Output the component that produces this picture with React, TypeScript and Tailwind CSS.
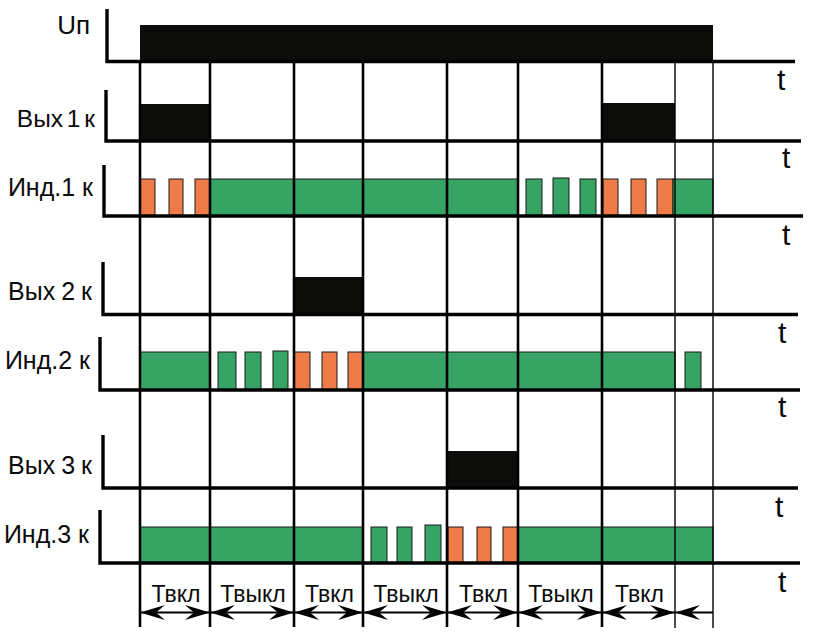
import React from "react";

type Seg = [number, number, string, number?];

const G = "#36a464";
const O = "#ef7c48";
const K = "#0c0c0a";

const rows: {
  label: string;
  lx: number;
  ly: number;
  axX: number;
  axTop: number;
  axY: number;
  axEnd: number;
  top: number;
  segs: Seg[];
  outline?: boolean;
  tx: number;
  ty: number;
  fs: number;
  ws: number;
}[] = [
  {
    label: "Uп", lx: 90, ly: 34, axX: 107, axTop: 9, axY: 61.5, axEnd: 795, top: 25,
    segs: [[140, 713, K]], tx: 777, ty: 90, fs: 26, ws: 0,
  },
  {
    label: "Вых 1 к", lx: 95, ly: 127, axX: 106, axTop: 90, axY: 141, axEnd: 801, top: 104,
    segs: [[140, 210, K], [602, 675, K, 103]], tx: 782, ty: 168, fs: 24.5, ws: -3,
  },
  {
    label: "Инд.1 к", lx: 93, ly: 196, axX: 104, axTop: 165, axY: 216, axEnd: 803, top: 179, outline: true,
    segs: [
      [140, 155, O], [169, 183, O], [195, 210, O],
      [210, 518, G],
      [526, 542, G], [553, 569, G, 178], [580, 596, G],
      [603, 618, O], [631, 646, O], [657, 673, O],
      [673, 713, G],
    ], tx: 782, ty: 245, fs: 25, ws: 0,
  },
  {
    label: "Вых 2 к", lx: 92, ly: 300, axX: 103, axTop: 262, axY: 314.5, axEnd: 798, top: 277,
    segs: [[294, 363, K]], tx: 778, ty: 343, fs: 25, ws: -1,
  },
  {
    label: "Инд.2 к", lx: 90, ly: 369, axX: 100, axTop: 337, axY: 390, axEnd: 800, top: 352, outline: true,
    segs: [
      [140, 210, G],
      [218, 236, G], [245, 261, G], [273, 288, G, 351],
      [294, 310, O], [322, 337, O], [348, 363, O],
      [363, 675, G],
      [685, 701, G],
    ], tx: 778, ty: 417, fs: 25, ws: 0,
  },
  {
    label: "Вых 3 к", lx: 92, ly: 474, axX: 103, axTop: 435, axY: 488, axEnd: 798, top: 451,
    segs: [[447, 518, K]], tx: 775, ty: 517, fs: 25, ws: -1,
  },
  {
    label: "Инд.3 к", lx: 89, ly: 543, axX: 100, axTop: 510, axY: 563, axEnd: 800, top: 527, outline: true,
    segs: [
      [140, 363, G],
      [371, 387, G], [397, 412, G], [425, 441, G, 525],
      [448, 463, O], [477, 491, O], [503, 518, O],
      [518, 713, G],
    ], tx: 778, ty: 592, fs: 25, ws: 0,
  },
];

const thick = [140, 210, 294, 363, 447, 518, 602];
const segments: [number, number, string][] = [
  [140, 210, "Твкл"],
  [210, 294, "Твыкл"],
  [294, 363, "Твкл"],
  [363, 447, "Твыкл"],
  [447, 518, "Твкл"],
  [518, 602, "Твыкл"],
  [602, 675, "Твкл"],
];

const AY = 612.5;
const headLeft = (x: number) =>
  `M${x},${AY} L${x + 25},${AY - 7.5} L${x + 16},${AY} L${x + 25},${AY + 7.5} Z`;
const headRight = (x: number) =>
  `M${x},${AY} L${x - 25},${AY - 7.5} L${x - 16},${AY} L${x - 25},${AY + 7.5} Z`;

export default function App() {
  return (
    <div className="w-[817px] h-[638px] bg-white overflow-hidden">
      <svg
        width="817"
        height="638"
        viewBox="0 0 817 638"
        fontFamily="'Liberation Sans', Arial, sans-serif"
        fill="#0a0a0a"
      >
        {/* signal blocks */}
        {rows.map((r, i) => (
          <g key={"s" + i}>
            {r.segs.map(([a, b, c, t], j) => (
              <rect
                key={j}
                x={a}
                y={t ?? r.top}
                width={b - a}
                height={r.axY - (t ?? r.top)}
                fill={c}
                stroke={r.outline ? "#1a1a1a" : "none"}
                strokeWidth={r.outline ? 1 : 0}
              />
            ))}
          </g>
        ))}

        {/* grid lines (below the supply bar) */}
        {thick.map((x) => (
          <line key={"o" + x} x1={x} y1={60} x2={x} y2={627} stroke="#000" strokeWidth={2.6} />
        ))}
        <line x1={675} y1={62} x2={675} y2={628} stroke="#000" strokeWidth={1.4} />
        <line x1={713} y1={60} x2={713} y2={628} stroke="#000" strokeWidth={1.4} />

        {/* axes */}
        {rows.map((r, i) => (
          <g key={"a" + i}>
            <path
              d={`M${r.axX},${r.axTop} L${r.axX},${r.axY} L${r.axEnd},${r.axY}`}
              fill="none"
              stroke="#000"
              strokeWidth={3.4}
            />
            <text x={r.lx} y={r.ly} textAnchor="end" fontSize={r.fs} wordSpacing={r.ws}>
              {r.label}
            </text>
            <text x={r.tx} y={r.ty} fontSize={30}>
              t
            </text>
          </g>
        ))}

        {/* bottom arrows */}
        <line x1={140} y1={AY} x2={713} y2={AY} stroke="#000" strokeWidth={2} />
        {segments.map(([a, b, label]) => (
          <g key={a}>
            <path d={headLeft(a)} fill="#000" />
            <path d={headRight(b)} fill="#000" />
            <text x={(a + b) / 2 + 1} y={602} textAnchor="middle" fontSize={23}>
              {label}
            </text>
          </g>
        ))}
        <path d={headLeft(675)} fill="#000" />
      </svg>
    </div>
  );
}
